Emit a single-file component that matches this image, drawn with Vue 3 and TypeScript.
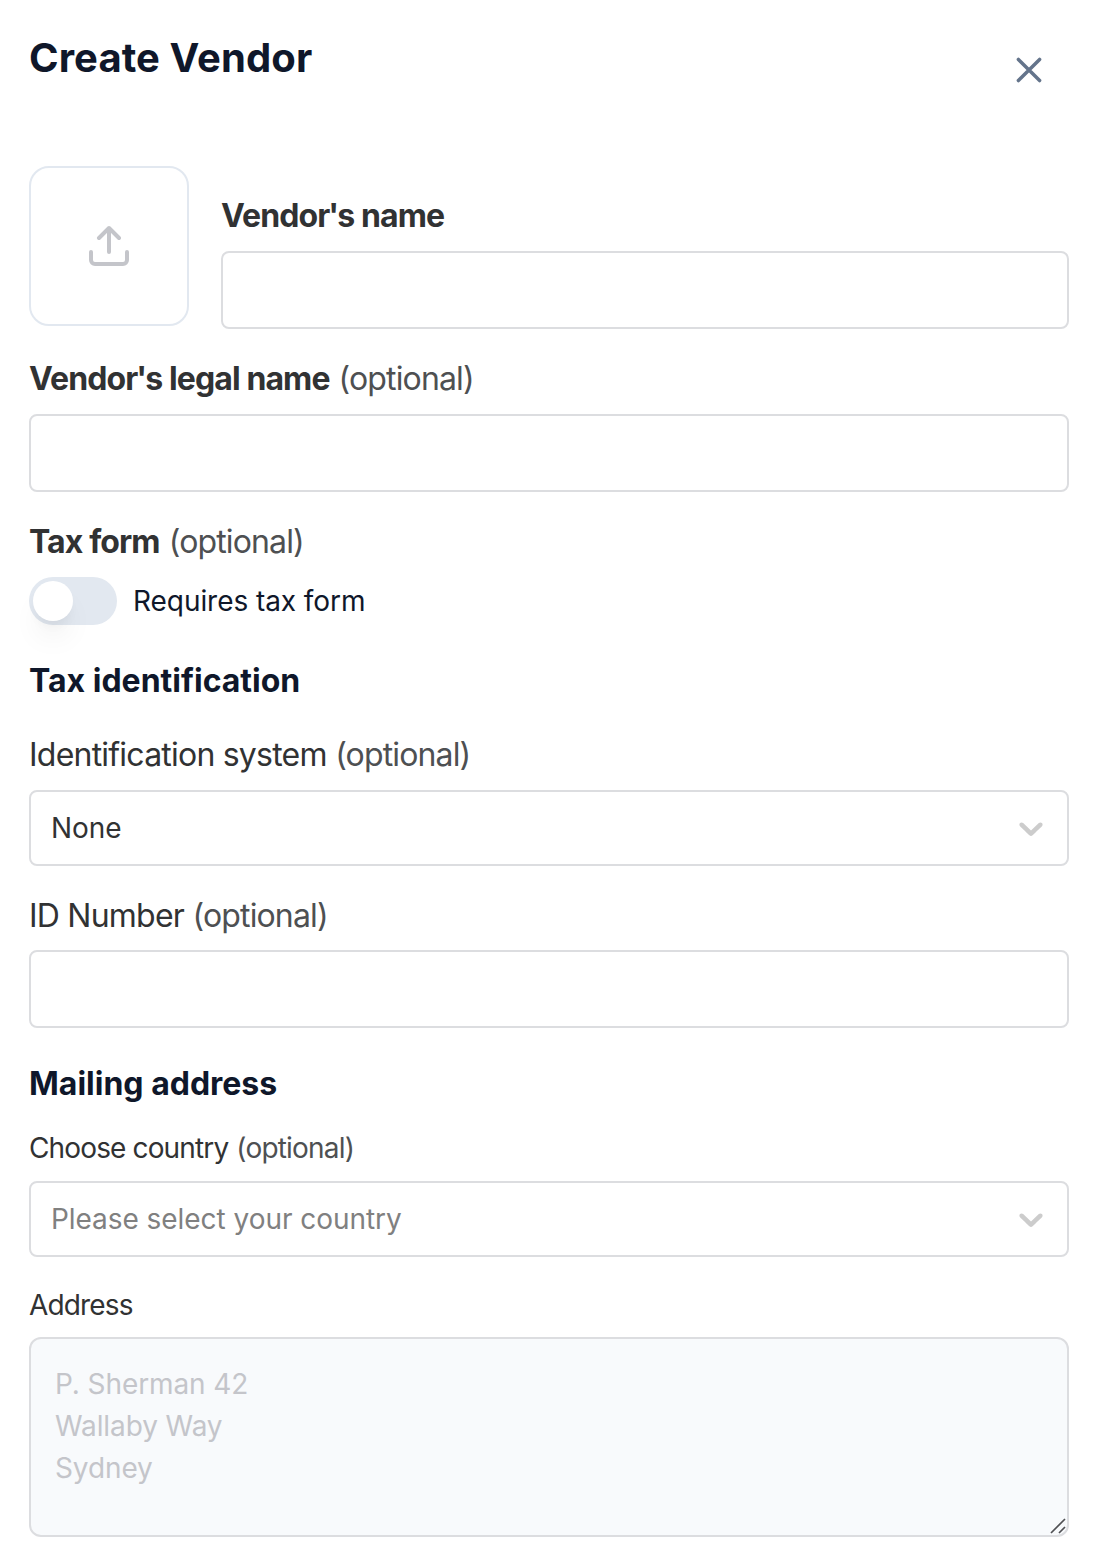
<script setup lang="ts">
import { ref } from 'vue'

const name = ref('')
const legalName = ref('')
const idNumber = ref('')
const address = ref('')
const requiresTaxForm = ref(false)
const addressHint = 'P. Sherman 42\nWallaby Way\nSydney'
</script>

<template>
  <main class="drawer">
    <header class="header">
      <h1>Create Vendor</h1>
      <button class="close" type="button" aria-label="Close">
        <svg width="48" height="48" viewBox="0 0 24 24" fill="none" stroke="currentColor" stroke-width="1.75" stroke-linecap="round">
          <path d="M6.7 6.7 17.3 17.3M17.3 6.7 6.7 17.3" />
        </svg>
      </button>
    </header>

    <div class="identity">
      <button class="upload" type="button" aria-label="Upload logo">
        <svg width="48" height="48" viewBox="0 0 24 24" fill="none" stroke="currentColor" stroke-width="2" stroke-linecap="round" stroke-linejoin="round">
          <path d="M3 15v4a2 2 0 0 0 2 2h14a2 2 0 0 0 2-2v-4M7 8l5-5 5 5M12 3v12" />
        </svg>
      </button>
      <div class="field grow">
        <label class="label strong" for="name"><span>Vendor<span class="apos">'</span>s name</span></label>
        <input id="name" v-model="name" class="control" />
      </div>
    </div>

    <div class="field legal">
      <label class="label strong" for="legal"><span>Vendor<span class="apos">'</span>s legal name</span><i>(optional)</i></label>
      <input id="legal" v-model="legalName" class="control" />
    </div>

    <div class="field tax">
      <div class="label strong"><span>Tax form</span><i>(optional)</i></div>
      <div class="switch-row">
        <button class="switch" type="button" role="switch" :aria-checked="requiresTaxForm" @click="requiresTaxForm = !requiresTaxForm">
          <span class="knob"></span>
        </button>
        <span class="switch-text">Requires tax form</span>
      </div>
    </div>

    <h2 class="tax-heading">Tax identification</h2>

    <div class="field system">
      <div class="label"><span>Identification system</span><i>(optional)</i></div>
      <div class="control select">
        <span>None</span>
        <svg class="chevron" width="40" height="40" viewBox="0 0 20 20" fill="currentColor">
          <path d="M4.516 7.548c0.436-0.446 1.043-0.481 1.576 0l3.908 3.747 3.908-3.747c0.533-0.481 1.141-0.446 1.574 0 0.436 0.445 0.408 1.197 0 1.615-0.406 0.418-4.695 4.502-4.695 4.502-0.217 0.223-0.502 0.335-0.787 0.335s-0.57-0.112-0.789-0.335c0 0-4.287-4.084-4.695-4.502s-0.436-1.17 0-1.615z" />
        </svg>
      </div>
    </div>

    <div class="field number">
      <label class="label" for="idn"><span>ID Number</span><i>(optional)</i></label>
      <input id="idn" v-model="idNumber" class="control" />
    </div>

    <h2 class="mail-heading">Mailing address</h2>

    <div class="field country">
      <div class="label small"><span>Choose country</span><i>(optional)</i></div>
      <div class="control select empty">
        <span>Please select your country</span>
        <svg class="chevron" width="40" height="40" viewBox="0 0 20 20" fill="currentColor">
          <path d="M4.516 7.548c0.436-0.446 1.043-0.481 1.576 0l3.908 3.747 3.908-3.747c0.533-0.481 1.141-0.446 1.574 0 0.436 0.445 0.408 1.197 0 1.615-0.406 0.418-4.695 4.502-4.695 4.502-0.217 0.223-0.502 0.335-0.787 0.335s-0.57-0.112-0.789-0.335c0 0-4.287-4.084-4.695-4.502s-0.436-1.17 0-1.615z" />
        </svg>
      </div>
    </div>

    <div class="field address">
      <label class="label small" for="address"><span>Address</span></label>
      <div class="area-wrap">
        <textarea id="address" v-model="address" class="area" :placeholder="addressHint"></textarea>
        <svg class="grip" width="16" height="16" viewBox="0 0 16 16" fill="none" stroke="#505154" stroke-width="1.7">
          <path d="M1 15 15 1M9 15l6-6" />
        </svg>
      </div>
    </div>
  </main>
</template>

<style>
body {
  background: #fff;
}
</style>

<style scoped>
.drawer {
  box-sizing: border-box;
  width: 1104px;
  height: 1560px;
  padding: 38px 35px 0 29px;
  overflow: hidden;
  font-family: Inter, "Liberation Sans", sans-serif;
  background: #fff;
  color: #0f172a;
}
button {
  padding: 0;
  border: 0;
  background: none;
  font: inherit;
}
.header {
  display: flex;
  justify-content: space-between;
  height: 128px;
}
h1, h2 {
  margin: 0;
  line-height: 40px;
  font-weight: 700;
  white-space: nowrap;
}
h1 {
  font-size: 40px;
  letter-spacing: 0.1px;
}
h2 {
  font-size: 32px;
  letter-spacing: 0;
}
.close {
  width: 48px;
  height: 48px;
  margin: 8px 16px 0 0;
  color: #64748b;
}
svg {
  display: block;
}
.identity {
  display: flex;
  align-items: flex-start;
  gap: 32px;
  height: 163px;
}
.upload {
  display: flex;
  box-sizing: border-box;
  width: 160px;
  height: 160px;
  align-items: center;
  justify-content: center;
  border: 2px solid #e2e8f0;
  border-radius: 20px;
  color: #c4c5ca;
}
.grow {
  flex: 1;
  padding-top: 30px;
}
.field {
  display: flex;
  flex-direction: column;
}
.label {
  display: flex;
  gap: 8.5px;
  height: 40px;
  margin-bottom: 15px;
  color: #313233;
  font-size: 32px;
  line-height: 40px;
  letter-spacing: -0.78px;
  white-space: nowrap;
}
.label i {
  color: #4e5052;
  font-style: normal;
  font-weight: 400;
  letter-spacing: -0.86px;
}
.strong {
  gap: 9px;
  font-weight: 700;
  letter-spacing: -0.9px;
}
.apos {
  margin: 0 -1px;
}
.small {
  gap: 8px;
  font-size: 28px;
  letter-spacing: -0.86px;
}
.small i {
  letter-spacing: -0.8px;
}
.control {
  box-sizing: border-box;
  width: 100%;
  height: 78px;
  padding: 0 20px;
  border: 2px solid #dcdde0;
  border-radius: 8px;
  outline: 0;
  background: #fff;
  color: #313233;
  font: 28px Inter, sans-serif;
}
.select {
  display: flex;
  height: 76px;
  align-items: center;
  justify-content: space-between;
  padding-right: 16px;
  letter-spacing: -0.05px;
}
.empty {
  color: #808080;
}
.chevron {
  color: #ccc;
}
.legal, .tax {
  margin-top: 30px;
}
.switch-row {
  display: flex;
  align-items: center;
  gap: 16px;
}
.switch {
  width: 88px;
  height: 48px;
  padding: 4px;
  border-radius: 24px;
  background: #e2e8f0;
}
.knob {
  display: block;
  width: 40px;
  height: 40px;
  border-radius: 50%;
  background: #fff;
  box-shadow: 0 20px 30px -6px rgb(0 0 0 / 8%), 0 8px 12px -4px rgb(0 0 0 / 5%);
}
.switch-text {
  font-size: 28px;
  line-height: 40px;
  letter-spacing: -0.06px;
}
.tax-heading {
  margin-top: 36px;
}
.system {
  margin-top: 34px;
}
.number {
  margin-top: 30px;
}
.number .label {
  margin-bottom: 14px;
}
.mail-heading {
  margin-top: 36px;
}
.country {
  margin-top: 24px;
}
.country .label {
  margin-bottom: 14px;
}
.address {
  margin-top: 28px;
}
.address .label {
  margin-bottom: 12px;
}
.country .label {
  margin-bottom: 13px;
}
.area-wrap {
  position: relative;
  height: 200px;
}
.area {
  box-sizing: border-box;
  display: block;
  width: 100%;
  height: 200px;
  padding: 24px;
  border: 2px solid #dcdde0;
  border-radius: 12px;
  outline: 0;
  resize: none;
  background: #f8fafc;
  color: #313233;
  font: 28px/42px Inter, sans-serif;
  letter-spacing: -0.1px;
}
.area::placeholder {
  color: #c4c5ca;
  opacity: 1;
}
.grip {
  position: absolute;
  right: 3px;
  bottom: 3px;
}
</style>
